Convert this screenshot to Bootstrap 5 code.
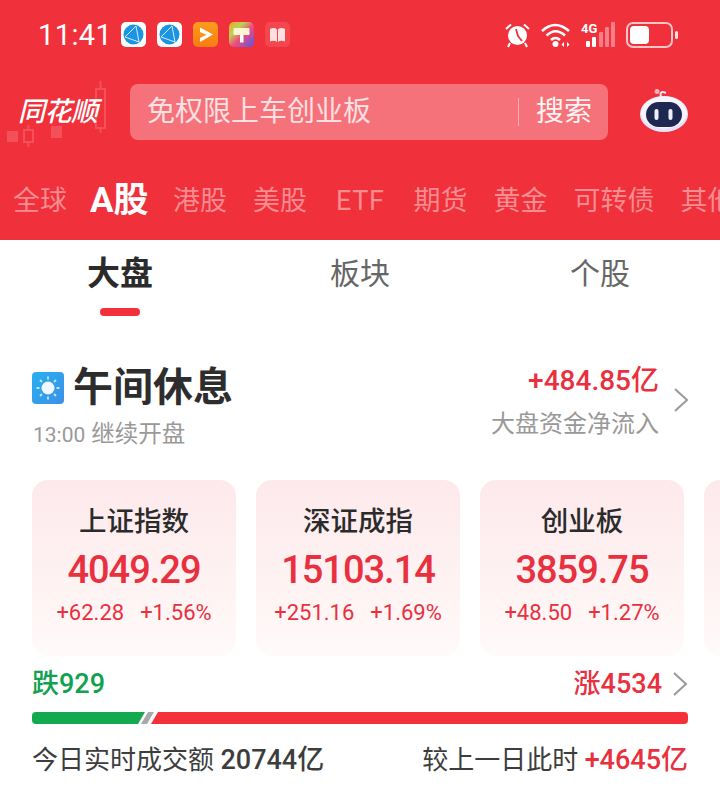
<!DOCTYPE html>
<html lang="zh">
<head>
  <meta charset="UTF-8">
  <title>同花顺 - 大盘</title>
  <link href="https://cdn.jsdelivr.net/npm/bootstrap@5.3.3/dist/css/bootstrap.min.css" rel="stylesheet">
  <style>
    body {
      width: 720px;
      height: 805px;
      overflow: hidden;
      background-color: #fff;
      color: #333;
      font-family: Roboto, "Noto Sans CJK SC", sans-serif;
    }
    .top-red { height: 240px; background-color: #f0303a; color: #fff; }
    .status-row { height: 84px; padding: 22px 40px 0 38px; }
    .clock { font-size: 29px; line-height: 26px; width: 83px; letter-spacing: .4px; }
    .app-icons { gap: 11px; }
    .app-ico { width: 25px; height: 25px; display: block; }
    .sys-icons { gap: 9px; }
    .search-row { height: 56px; }
    .logo-box { width: 130px; height: 56px; position: relative; }
    .logo-candles { position: absolute; left: 0; top: 0; overflow: visible; }
    .logo-text {
      position: absolute; left: 18px; top: 12px;
      font-size: 27px; line-height: 32px; font-weight: 500; font-style: italic; letter-spacing: -.5px;
    }
    .search-box {
      width: 478px; height: 56px; padding: 0 16px 0 17px;
      background-color: #f6727a; border-radius: 8px;
      font-size: 28px; color: #fde0e2;
    }
    .search-sep { width: 1px; height: 28px; background-color: #fbb3b8; margin-right: 17px; }
    .search-btn { color: #fff2f2; }
    .robot-box { width: 112px; }
    .market-tabs { height: 60px; margin-top: 31px; padding-left: 13px; gap: 26px; font-size: 27px; color: #f98c90; white-space: nowrap; }
    .market-tabs span { flex-shrink: 0; }
    .market-tabs .on { color: #fff; font-size: 35px; font-weight: 700; margin: 0 -3px; width: 60px; }
    .market-tabs .wide-tab { margin: 0 3px; letter-spacing: .6px; }
    .sub-tabs { height: 76px; }
    .sub-tab { width: 240px; text-align: center; font-size: 30px; line-height: 68px; color: #666; position: relative; }
    .sub-tab.on { font-weight: 700; font-size: 33px; color: #2b2b2b; }
    .sub-tab.on::after {
      content: ""; position: absolute; left: 100px; top: 68px;
      width: 40px; height: 8px; border-radius: 4px; background-color: #f4303c;
    }
    .summary-row { padding: 45px 32px 0; height: 164px; }
    .sun-ico { width: 32px; height: 32px; display: block; margin-right: 9px; }
    .break-title { font-size: 40px; line-height: 54px; font-weight: 700; color: #2d2d2d; }
    .break-sub { font-size: 23.5px; line-height: 30px; color: #999; margin-top: 4px; }
    .break-time { font-size: 21px; margin-left: 1px; }
    .flow-val { font-size: 28px; line-height: 40px; font-weight: 500; color: #e9303f; }
    .flow-label { font-size: 24px; line-height: 30px; color: #999; margin-top: 8px; }
    .chev { width: 16px; height: 26px; display: block; }
    .flow-chev { margin-left: 14px; margin-right: -1px; }
    .idx-cards { gap: 20px; height: 176px; padding-left: 32px; overflow: hidden; }
    .idx-card {
      flex: 0 0 204px; height: 176px; text-align: center; padding-top: 23px;
      border-radius: 16px; background: linear-gradient(180deg, #fde9eb 0%, #fff6f6 80%, #fffbfb 100%);
    }
    .idx-name { font-size: 27.5px; line-height: 38px; font-weight: 500; color: #2b2b2b; }
    .idx-val { font-size: 38px; line-height: 48px; font-weight: 500; color: #e9303f; margin-top: 5px; letter-spacing: -1px; }
    .idx-chg { font-size: 22px; line-height: 30px; color: #e9303f; gap: 16px; margin-top: 4px; }
    .counts { padding: 0 32px; height: 56px; font-size: 27px; font-weight: 500; }
    .fall-txt { color: #12a150; }
    .rise-txt { color: #e9303f; }
    .counts-chev { margin-left: 10px; }
    .ratio-bar { margin: 0 32px; height: 12px; }
    .ratio-bar svg { display: block; }
    .turnover { padding: 0 32px; height: 72px; font-size: 26px; color: #3d3d3d; }
    .turnover b { font-weight: 500; font-size: 27px; }
  </style>
</head>
<body>
  <!-- Red header -->
  <div class="top-red">
    <div class="status-row d-flex align-items-start">
      <div class="clock">11:41</div>
      <div class="app-icons d-flex">
        <svg class="app-ico" viewBox="0 0 25 25"><rect width="25" height="25" rx="5" fill="#fff"/><circle cx="12.500" cy="12.500" r="10" fill="#1c94e4"/><path d="M4 15L15 4M15 4L18 20M4 15L18 20" stroke="#d5eefc" stroke-width="1" fill="none"/></svg>
        <svg class="app-ico" viewBox="0 0 25 25"><rect width="25" height="25" rx="5" fill="#fff"/><circle cx="12.500" cy="12.500" r="10" fill="#1c94e4"/><path d="M4 15L15 4M15 4L18 20M4 15L18 20" stroke="#d5eefc" stroke-width="1" fill="none"/></svg>
        <svg class="app-ico" viewBox="0 0 25 25"><defs><linearGradient id="og" x1="0" y1="0" x2="0" y2="1"><stop offset="0" stop-color="#fb9d1b"/><stop offset="1" stop-color="#f77c12"/></linearGradient></defs><rect width="25" height="25" rx="5" fill="url(#og)"/><path d="M7 5.500L20 12.500L7 20Z" fill="#fff"/><path d="M7 10L13.500 12.800L7 16Z" fill="#fb9518"/></svg>
        <svg class="app-ico" viewBox="0 0 25 25"><defs><linearGradient id="rb" x1="0" y1="0" x2="1" y2="1"><stop offset="0" stop-color="#f9a02a"/><stop offset=".3" stop-color="#b7d455"/><stop offset=".55" stop-color="#f4497a"/><stop offset="1" stop-color="#4a5cf0"/></linearGradient></defs><rect width="25" height="25" rx="5" fill="url(#rb)"/><rect x="4.500" y="6" width="16" height="7" rx="1" fill="#fdf6d0"/><path d="M11 13H14.500V20.500H11Z" fill="#fff"/></svg>
        <svg class="app-ico" viewBox="0 0 25 25"><rect width="25" height="25" rx="5" fill="#f4464f"/><path d="M5 7Q9.500 5 12 7.500V20Q9.500 18 5 19.500ZM13 7.500Q15.500 5 20 7V19.500Q15.500 18 13 20Z" fill="#fde0e2"/></svg>
      </div>
      <div class="sys-icons d-flex align-items-center ms-auto">
        <svg width="27" height="26" viewBox="0 0 27 26"><circle cx="13.500" cy="13.500" r="9.500" fill="#fff"/><path d="M12 7L14 14L18 19" stroke="#f0303a" stroke-width="1.800" fill="none"/><path d="M2 7L7 2.500M25 7L20 2.500M6 21L4 25M21 21L23 25" stroke="#fff" stroke-width="2" fill="none"/></svg>
        <svg width="32" height="26" viewBox="0 0 32 26"><path d="M2 9Q15 -3 29 9M6.500 13.500Q15.500 5 25 13.500M11 18Q15.500 14 20 18" stroke="#fff" stroke-width="2.600" fill="none"/><circle cx="15.500" cy="22" r="3" fill="#fff"/><path d="M24 20L21.500 22.500L24 25ZM27 20L29.500 22.500L27 25Z" fill="#fff"/></svg>
        <svg width="36" height="26" viewBox="0 0 36 26"><text x="0" y="11" font-size="13" font-weight="700" fill="#fff" font-family="Roboto">4G</text><rect x="5" y="19" width="4" height="6" rx="1" fill="#fff"/><rect x="11" y="15" width="4" height="10" rx="1" fill="#fff"/><rect x="18" y="10" width="4" height="15" rx="1" fill="#f77f87"/><rect x="24" y="5" width="4" height="20" rx="1" fill="#f77f87"/><rect x="30" y="0" width="4" height="25" rx="1" fill="#f77f87"/></svg>
        <svg width="54" height="26" viewBox="0 0 54 26"><rect x="1" y="1" width="45" height="24" rx="6" fill="none" stroke="#fbc5c8" stroke-width="2"/><rect x="4" y="4" width="19" height="18" rx="4" fill="#fff"/><rect x="49" y="9" width="3" height="8" rx="1.500" fill="#fde0e2"/></svg>
      </div>
    </div>
    <div class="search-row d-flex align-items-center">
      <div class="logo-box">
        <svg class="logo-candles" width="130" height="56" viewBox="0 0 130 56"><g fill="#f4505a"><rect x="7" y="47" width="11" height="11"/><rect x="51" y="42" width="11" height="12"/></g><g fill="none" stroke="#f4505a" stroke-width="2"><rect x="24" y="46" width="9" height="12"/><path d="M28.500 41V46M28.500 58V63"/><rect x="96" y="5" width="9" height="39"/><path d="M100.500 -3V5M100.500 44V49"/></g></svg>
        <div class="logo-text">同花顺</div>
      </div>
      <div class="search-box d-flex align-items-center">
        <span>免权限上车创业板</span>
        <span class="search-sep ms-auto"></span>
        <span class="search-btn">搜索</span>
      </div>
      <div class="robot-box d-flex justify-content-center">
        <svg width="50" height="46" viewBox="0 0 50 46"><path d="M22 8Q20 1 27 4" stroke="#e8e6f6" stroke-width="2" fill="none"/><circle cx="18" cy="2.500" r="2.500" fill="#f7b4ba"/><ellipse cx="25" cy="25" rx="24" ry="18" fill="#e6e2f8"/><ellipse cx="25" cy="23.500" rx="23" ry="16" fill="#f6f5fd"/><rect x="7" y="13" width="36" height="25" rx="12.500" fill="#1e2850"/><rect x="15.500" y="20" width="4" height="11" rx="2" fill="#eef0fb"/><rect x="29.500" y="20" width="4" height="11" rx="2" fill="#eef0fb"/></svg>
      </div>
    </div>
    <div class="market-tabs d-flex align-items-center overflow-hidden">
      <span>全球</span><span class="on">A股</span><span>港股</span><span>美股</span><span class="wide-tab">ETF</span><span>期货</span><span>黄金</span><span>可转债</span><span>其他</span>
    </div>
  </div>

  <!-- Sub tabs -->
  <div class="sub-tabs d-flex">
    <div class="sub-tab on">大盘</div>
    <div class="sub-tab">板块</div>
    <div class="sub-tab">个股</div>
  </div>

  <!-- Midday break summary -->
  <div class="summary-row d-flex justify-content-between align-items-start">
    <div>
      <div class="d-flex align-items-center">
        <svg class="sun-ico" viewBox="0 0 32 32"><defs><linearGradient id="sky" x1="0" y1="0" x2="1" y2="1"><stop offset="0" stop-color="#27b0ee"/><stop offset="1" stop-color="#3d8fe8"/></linearGradient></defs><rect width="32" height="32" rx="4" fill="url(#sky)"/><circle cx="16" cy="16" r="6.500" fill="#eef8fe"/><path d="M16 4.500V7.500M16 24.500V27.500M4.500 16H7.500M24.500 16H27.500M8 8L10 10M22 22L24 24M8 24L10 22M22 10L24 8" stroke="#bfe6fb" stroke-width="1.800"/></svg>
        <div class="break-title">午间休息</div>
      </div>
      <div class="break-sub"><span class="break-time">13:00</span> 继续开盘</div>
    </div>
    <div class="d-flex align-items-center">
      <div class="text-end">
        <div class="flow-val">+484.85亿</div>
        <div class="flow-label">大盘资金净流入</div>
      </div>
      <svg class="chev flow-chev" viewBox="0 0 16 26"><path d="M2 2L14 13L2 24" stroke="#999" stroke-width="2" fill="none"/></svg>
    </div>
  </div>

  <!-- Index cards -->
  <div class="idx-cards d-flex">
    <div class="idx-card">
      <div class="idx-name">上证指数</div>
      <div class="idx-val">4049.29</div>
      <div class="idx-chg d-flex justify-content-center"><span>+62.28</span><span>+1.56%</span></div>
    </div>
    <div class="idx-card">
      <div class="idx-name">深证成指</div>
      <div class="idx-val">15103.14</div>
      <div class="idx-chg d-flex justify-content-center"><span>+251.16</span><span>+1.69%</span></div>
    </div>
    <div class="idx-card">
      <div class="idx-name">创业板</div>
      <div class="idx-val">3859.75</div>
      <div class="idx-chg d-flex justify-content-center"><span>+48.50</span><span>+1.27%</span></div>
    </div>
    <div class="idx-card"></div>
  </div>

  <!-- Rise / fall counts -->
  <div class="counts d-flex align-items-center justify-content-between">
    <span class="fall-txt">跌929</span>
    <span class="d-flex align-items-center"><span class="rise-txt">涨4534</span>
      <svg class="chev counts-chev" viewBox="0 0 16 26"><path d="M2 2L14 13L2 24" stroke="#999" stroke-width="2" fill="none"/></svg></span>
  </div>
  <div class="ratio-bar">
    <svg width="656" height="12" viewBox="0 0 656 12"><path d="M4 0H113L106 12H4A4 4 0 0 1 0 8V4A4 4 0 0 1 4 0Z" fill="#12a94f"/><path d="M116 0H122L115 12H109Z" fill="#a9a9ad"/><path d="M126 0H652A4 4 0 0 1 656 4V8A4 4 0 0 1 652 12H119Z" fill="#f5303a"/></svg>
  </div>
  <div class="turnover d-flex align-items-center justify-content-between">
    <span>今日实时成交额 <b>20744亿</b></span>
    <span>较上一日此时 <b class="rise-txt">+4645亿</b></span>
  </div>

  <script src="https://cdn.jsdelivr.net/npm/bootstrap@5.3.3/dist/js/bootstrap.bundle.min.js"></script>
</body>
</html>
